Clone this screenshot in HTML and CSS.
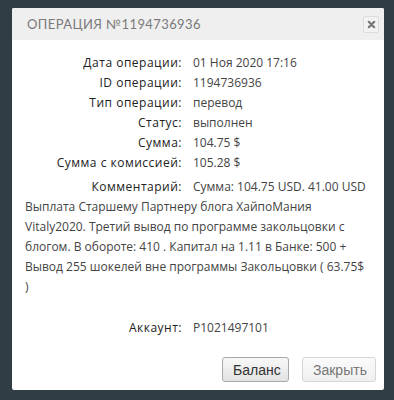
FILE: index.html
```html
<!DOCTYPE html>
<html lang="ru">
<head>
    <meta charset="UTF-8">
    <meta name="viewport" content="width=device-width, initial-scale=1.0">
    <title>Операция</title>
    <link rel="stylesheet" href="styles.css">
</head>
<body>
    <div class="modal">
        <div class="modal-header">
            <h3>Операция №1194736936</h3>
            <button class="close" title="Закрыть">
                <svg width="9" height="9" viewBox="0 0 10 10"><path d="M2 2 L8 8 M8 2 L2 8" stroke="#777" stroke-width="2.4" stroke-linecap="round"/></svg>
            </button>
        </div>
        <div class="modal-body">
            <div class="row"><span class="label">Дата операции:</span><span class="value">01 Ноя 2020 17:16</span></div>
            <div class="row"><span class="label">ID операции:</span><span class="value">1194736936</span></div>
            <div class="row"><span class="label">Тип операции:</span><span class="value">перевод</span></div>
            <div class="row"><span class="label">Статус:</span><span class="value">выполнен</span></div>
            <div class="row"><span class="label">Сумма:</span><span class="value">104.75 $</span></div>
            <div class="row"><span class="label">Сумма с комиссией:</span><span class="value">105.28 $</span></div>
            <div class="row comment"><span class="label">Комментарий:</span><span class="value">Сумма: 104.75 USD. 41.00 USD Выплата Старшему Партнеру блога ХайпоМания Vitaly2020. Третий вывод по программе закольцовки с блогом. В обороте: 410 . Капитал на 1.11 в Банке: 500 + Вывод 255 шокелей вне программы Закольцовки ( 63.75$ )</span></div>
            <div class="row account"><span class="label">Аккаунт:</span><span class="value">P1021497101</span></div>
        </div>
        <div class="modal-footer">
            <button class="btn btn-main">Баланс</button>
            <button class="btn btn-light">Закрыть</button>
        </div>
    </div>
</body>
</html>
```

FILE: styles.css
```css
body {
    margin: 0;
    padding: 8px 10px 10px 12px;
    background-color: #313d44;
    font-family: "Open Sans", Arial, sans-serif;
}
.modal {
    width: 372px;
    background: white;
    border-radius: 2px;
    overflow: hidden;
}
.modal-header {
    height: 32px;
    background-color: #efefef;
    padding: 0 5px 0 15px;
    display: flex;
    align-items: center;
    justify-content: space-between;
}
.modal-header h3 {
    margin: 0;
    font-family: "Lato", sans-serif;
    font-size: 13px;
    font-weight: normal;
    text-transform: uppercase;
    letter-spacing: 0.4px;
    color: #7a7a7a;
}
.close {
    width: 16px;
    height: 17px;
    padding: 0;
    border: 1px solid #dcdcdc;
    border-radius: 2px;
    background: #f2f2f2;
    display: flex;
    align-items: center;
    justify-content: center;
    margin-top: 1px;
}
.modal-body {
    padding: 13px 15px 0 13px;
    font-size: 12px;
    line-height: 20px;
}
.row .label {
    display: inline-block;
    width: 157px;
    text-align: right;
    color: #222;
    letter-spacing: 0.5px;
    margin-right: 11px;
}
.row .value {
    color: #444;
}
.comment {
    margin-top: 4px;
}
.account {
    margin-top: 21px;
}
.modal-footer {
    display: flex;
    justify-content: flex-end;
    gap: 13px;
    padding: 19px 8px 8px 0;
}
.btn {
    height: 25px;
    padding: 0 10px;
    font-family: Arial, sans-serif;
    font-size: 14px;
    border-radius: 3px;
    cursor: pointer;
}
.btn-main {
    width: 67px;
    color: #333;
    border: 1px solid #a8a8a8;
    background: linear-gradient(#f8f8f8, #e2e2e2);
}
.btn-light {
    width: 74px;
    color: #777;
    border: 1px solid #d6d6d6;
    background: linear-gradient(#fbfbfb, #efefef);
}
```
